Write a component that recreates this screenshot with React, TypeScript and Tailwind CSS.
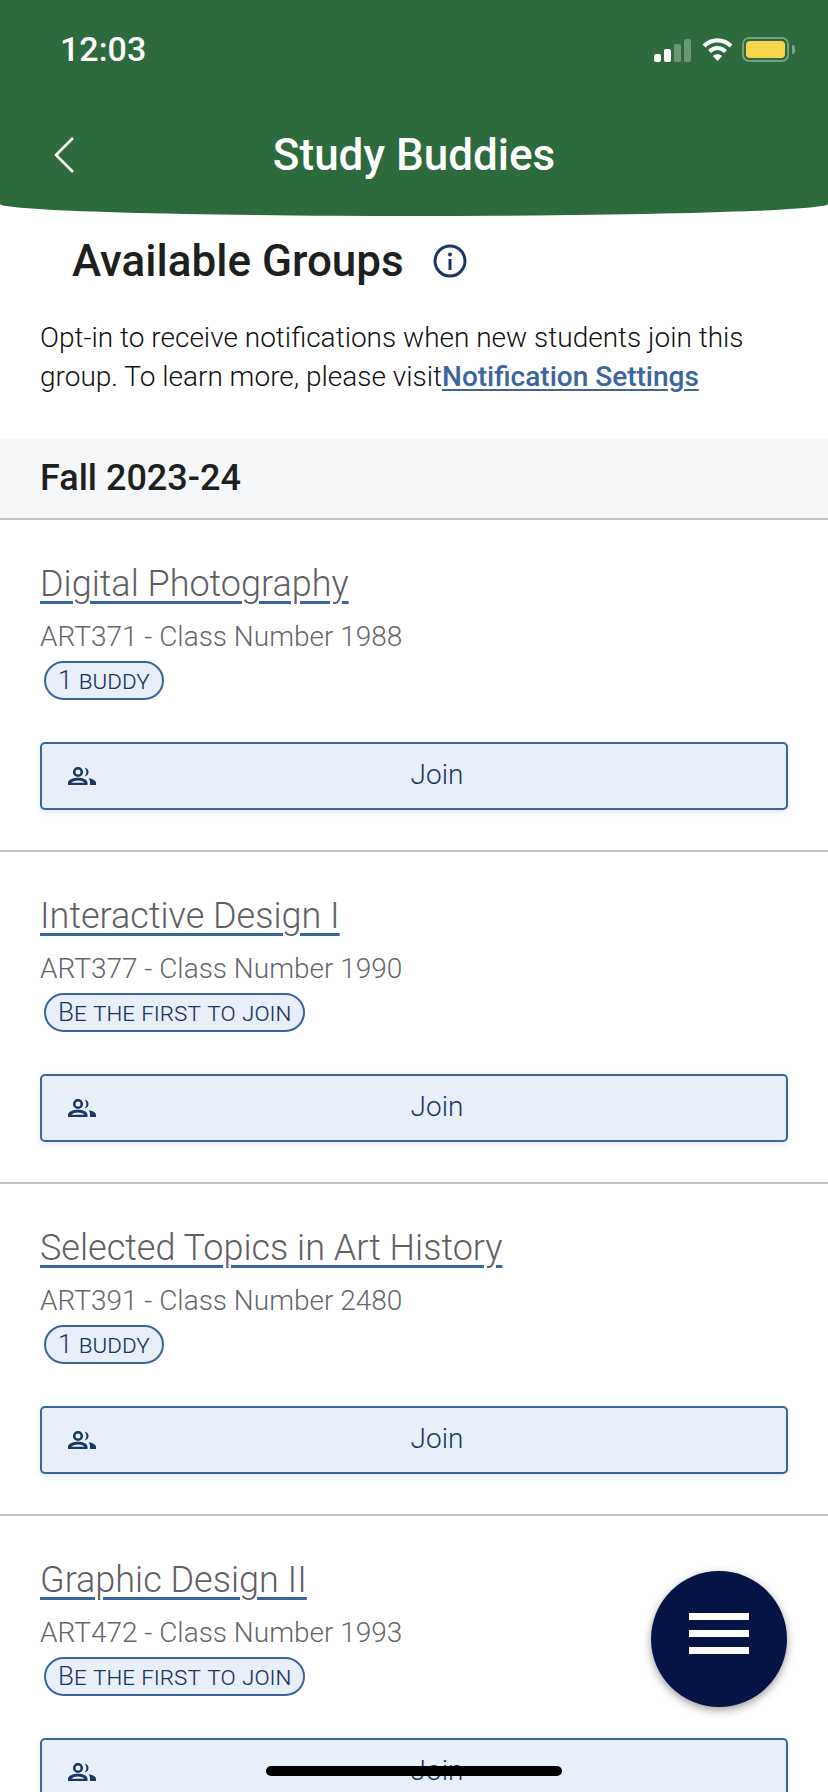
const groups = [
  { name: "Digital Photography", code: "ART371 - Class Number 1988", tag: "1 buddy" },
  { name: "Interactive Design I", code: "ART377 - Class Number 1990", tag: "Be the first to join" },
  { name: "Selected Topics in Art History", code: "ART391 - Class Number 2480", tag: "1 buddy" },
  { name: "Graphic Design II", code: "ART472 - Class Number 1993", tag: "Be the first to join" },
];

function PeopleIcon() {
  return (
    <svg width="28" height="18" viewBox="0 0 28 18" className="text-[#1c3763] shrink-0">
      <circle cx="10" cy="5" r="3.800" fill="none" stroke="currentColor" strokeWidth="2.600" />
      <path fill="currentColor" d="M16.800 .7a5 4.500 0 0 1 0 8.700a7.200 7.200 0 0 0 0-8.700z" />
      <path
        fill="currentColor"
        fillRule="evenodd"
        d="M0 18v-2.200C0 12.800 5 10.800 10 10.800s9.500 2 9.500 5V18zM3.400 15.800h13C15 14.200 12.700 13.400 10 13.400s-5 .8-6.600 2.400z"
      />
      <path fill="currentColor" d="M20.500 11.300c3.700.5 7.500 2 7.500 4.700V18h-6v-2.200c0-1.800-.3-3-1.500-4.500z" />
    </svg>
  );
}

function StatusIcons() {
  return (
    <div className="flex items-start">
      <div className="flex items-end gap-[3px] h-[24px] mt-[1px]">
        <div className="w-[7px] h-[8px] rounded-[2px] bg-white" />
        <div className="w-[7px] h-[13px] rounded-[2px] bg-white" />
        <div className="w-[7px] h-[18px] rounded-[2px] bg-white/30" />
        <div className="w-[7px] h-[23px] rounded-[2px] bg-white/30" />
      </div>
      <svg width="31" height="24" viewBox="0 0 31 24" className="ml-[11px]">
        <path d="M2 9C10 1.500 21 1.500 29 9" fill="none" stroke="#fff" strokeWidth="4.200" />
        <path d="M7.500 14.500C12.500 10 18.500 10 23.500 14.500" fill="none" stroke="#fff" strokeWidth="4.200" />
        <path d="M15.500 24L10.800 19C13.500 16.800 17.500 16.800 20.200 19z" fill="#fff" />
      </svg>
      <div className="ml-[9px] w-[47px] h-[25px] rounded-[7px] border-2 border-white/35 p-[2px]">
        <div className="w-full h-full rounded-[4px] bg-[#f6d54a]" />
      </div>
      <div className="ml-[3px] mt-[8px] w-[3px] h-[9px] rounded-r-[3px] bg-white/40" />
    </div>
  );
}

function GroupRow({ name, code, tag }: { name: string; code: string; tag: string }) {
  return (
    <div className="px-[40px] pt-[40px] border-b-2 border-[#c2c2c2] h-[332px]">
      <div className="text-[36px] leading-[48px] font-light text-[#5f6066] underline decoration-[#3a659f] decoration-[3px] underline-offset-[5px]">
        {name}
      </div>
      <div className="mt-[10px] text-[28px] leading-[38px] font-light text-[#66676c]">{code}</div>
      <div className="mt-[5px] ml-[4px] w-fit h-[39px] px-[12px] flex items-center rounded-full border-2 border-[#3a659f] bg-[#e8eff9] text-[#1c3763] text-[26px] font-light [font-variant-caps:small-caps]">
        {tag}
      </div>
      <button className="relative mt-[42px] w-full h-[68px] flex items-center justify-center rounded-[5px] border-2 border-[#3a659f] bg-[#e8eff9] shadow-[0_2px_6px_rgba(58,101,159,0.15)] text-[28px] font-light text-[#1c3763]">
        <span className="absolute left-[26px] top-[23px]">
          <PeopleIcon />
        </span>
        <span className="ml-[46px] mb-[2px]">Join</span>
      </button>
    </div>
  );
}

export default function App() {
  return (
    <div className="relative w-[828px] h-[1792px] overflow-hidden bg-white font-['Roboto',sans-serif]">
      <header className="h-[216px] bg-[#2d6a3d] rounded-b-[50%_12px] text-white px-[52px] pt-[30px]">
        <div className="flex items-start justify-between mr-[-19px]">
          <span className="ml-[8px] text-[34px] leading-[38px] font-medium">12:03</span>
          <div className="mt-[7px]">
            <StatusIcons />
          </div>
        </div>
        <div className="relative mt-[62px] flex justify-center">
          <svg width="22" height="38" viewBox="0 0 22 38" className="absolute left-[1px] top-[6px]">
            <path d="M20 2L3 19l17 17" fill="none" stroke="#fff" strokeWidth="2.600" />
          </svg>
          <h1 className="text-[44px] leading-[50px] font-medium">Study Buddies</h1>
        </div>
      </header>

      <section className="px-[40px] pt-[20px]">
        <div className="flex items-center ml-[32px]">
          <h2 className="text-[44px] leading-[50px] font-medium text-[#1e1f21]">Available Groups</h2>
          <svg width="34" height="34" viewBox="0 0 34 34" className="ml-[29px]">
            <circle cx="17" cy="17" r="15" fill="none" stroke="#1c3763" strokeWidth="3" />
            <circle cx="17" cy="10.500" r="2" fill="#1c3763" />
            <rect x="15.500" y="15" width="3" height="11" fill="#1c3763" />
          </svg>
        </div>
        <p className="mt-[32px] text-[28px] leading-[39px] font-light text-[#111]">
          Opt-in to receive notifications when new students join this group. To learn more, please visit
          <a className="font-medium text-[#3a659f] underline underline-offset-[3px]">Notification Settings</a>
        </p>
      </section>

      <div className="mt-[42px] h-[82px] pl-[40px] flex items-center bg-[#f6f7f9] border-b-2 border-[#c2c2c2] text-[36px] font-medium text-[#1e1f21]">
        Fall 2023-24
      </div>

      {groups.map((g) => (
        <GroupRow key={g.name} name={g.name} code={g.code} tag={g.tag} />
      ))}

      <button className="absolute left-[651px] top-[1571px] w-[136px] h-[136px] rounded-full bg-[#051445] shadow-[0_3px_8px_rgba(0,0,0,0.4)] flex flex-col items-center justify-center gap-[10px] pb-[12px]">
        <span className="w-[60px] h-[7px] bg-white" />
        <span className="w-[60px] h-[7px] bg-white" />
        <span className="w-[60px] h-[7px] bg-white" />
      </button>
      <div className="absolute left-[266px] top-[1766px] w-[296px] h-[10px] rounded-full bg-black" />
    </div>
  );
}
